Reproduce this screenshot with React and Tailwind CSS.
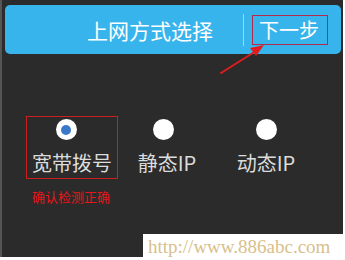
import React from "react";

const cjk = { fontFamily: '"Noto Sans CJK SC", "Noto Sans", sans-serif' };

function Radio({ checked, className = "" }) {
  return (
    <div className={"w-[21px] h-[21px] rounded-full bg-white flex items-center justify-center " + className}>
      {checked && <div className="w-[10px] h-[10px] rounded-full bg-[#3a78cc]" />}
    </div>
  );
}

export default function App() {
  return (
    <div className="relative w-[345px] h-[260px] bg-white overflow-hidden" style={cjk}>
      <div className="w-[343px] h-[257px] bg-[#2b2b2b] border-l-2 border-[#555555] pt-[5px] pl-[3px]">
        {/* header */}
        <div className="w-[336px] h-[49px] rounded-[5px] bg-[#37b4ec] flex items-center">
          <div className="ml-[82px] text-[21px] leading-[28px] text-white whitespace-nowrap">上网方式选择</div>
          <div className="ml-[30px] w-px h-[32px] bg-[#9ad8f4]" />
          <div className="ml-[8px] w-[76px] h-[30px] border border-[#b02a4a] flex items-center pl-[6px]">
            <span className="text-[20px] leading-[26px] text-white whitespace-nowrap">下一步</span>
          </div>
        </div>

        {/* options */}
        <div className="flex mt-[62px] ml-[21px]">
          <div className="w-[92px] h-[63px] border border-[#cc2020] flex flex-col items-center pt-[2px]">
            <Radio checked className="mr-[12px]" />
            <div className="mt-[9px] text-[20px] leading-[28px] text-[#dcdcdc] whitespace-nowrap">宽带拨号</div>
          </div>
          <div className="w-[92px] ml-[3px] flex flex-col items-center pt-[3px]">
            <Radio className="mr-[8px]" />
            <div className="mt-[9px] text-[20px] leading-[28px] text-[#dcdcdc] whitespace-nowrap">静态IP</div>
          </div>
          <div className="w-[92px] ml-[7px] flex flex-col items-center pt-[3px]">
            <Radio />
            <div className="mt-[9px] text-[20px] leading-[28px] text-[#dcdcdc] whitespace-nowrap">动态IP</div>
          </div>
        </div>

        <div className="ml-[27px] mt-[9px] text-[13px] leading-[18px] text-[#e8161a] whitespace-nowrap">确认检测正确</div>
      </div>

      {/* arrow */}
      <svg className="absolute left-0 top-0" width="345" height="260" viewBox="0 0 345 260">
        <line x1="221" y1="73" x2="256" y2="51" stroke="#e21c1c" strokeWidth="2" strokeLinecap="round" />
        <polygon points="264,45 250,48 256,56" fill="#e21c1c" />
      </svg>

      {/* watermark */}
      <div className="absolute left-[143px] top-[234px] w-[202px] h-[26px] bg-white pl-[5px] flex items-center">
        <span className="text-[19px] leading-[22px] text-[#d8c08c] whitespace-nowrap" style={{ fontFamily: '"Liberation Serif", serif' }}>
          http://www.886abc.com
        </span>
      </div>
    </div>
  );
}
